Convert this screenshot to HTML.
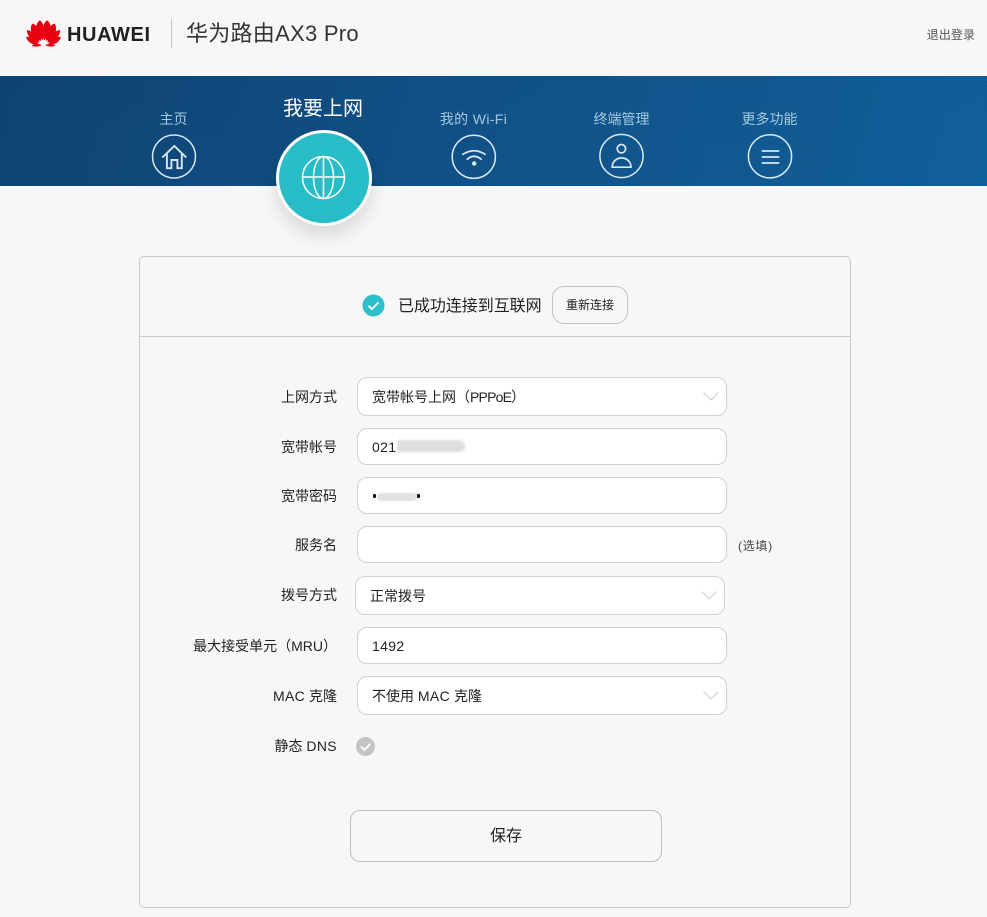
<!DOCTYPE html>
<html lang="zh"><head><meta charset="utf-8"><title>华为路由AX3 Pro</title>
<style>
html,body{margin:0;padding:0}
body{width:987px;height:917px;overflow:hidden;position:relative;background:#f7f7f8;font-family:"Liberation Sans","Noto Sans CJK SC",sans-serif;color:#222}
.a{position:absolute;white-space:nowrap}
.band{left:0;top:76px;width:987px;height:110px;background:linear-gradient(100deg,#0f4373 0%,#115086 45%,#115f9a 100%)}
.dots{left:0;top:76px;width:987px;height:70px;background-image:radial-gradient(rgba(0,0,0,.07) .7px,transparent .9px);background-size:4px 4px;-webkit-mask-image:linear-gradient(#000,transparent);mask-image:linear-gradient(#000,transparent)}
.nav{color:#a5c9e0;font-size:14px;line-height:18px;text-align:center;transform:translateX(-50%)}
.ic{position:absolute}
.card{left:139px;top:256px;width:712px;height:652px;border:1px solid #c9c9c9;border-radius:5px;box-sizing:border-box}
.line{left:140px;top:336px;width:710px;height:1px;background:#c9c9c9}
.f{box-sizing:border-box;background:#fff;border:1px solid #cfcfcf;border-radius:10px;width:370px;font-size:14px;color:#222;padding-left:14px}
.l{font-size:14px;line-height:20px;right:650px;text-align:right;color:#222}
.btn{box-sizing:border-box;border:1px solid #c4c4c4;border-radius:10px;text-align:center;color:#222}
svg.ch{position:absolute;right:7px;top:14px}
.s{letter-spacing:.35px}
</style></head><body>

<svg class="a" style="left:26px;top:20px" width="35" height="27" viewBox="0 0 35 27" fill="#e60012">
<g>
<path d="M17 20.5C12 15 9.5 9.5 10.5 5.5 11 3 12.5 1 14 .4 16.5 2 18 6 17.9 10 17.8 13.5 17.5 17 17 20.5Z"/>
<path d="M15 21C9.5 18 4.8 13.5 4.8 8.5 4.8 6.5 5.5 4.8 6.5 3.5 11.5 5.5 15.8 11.5 15 21Z"/>
<path d="M13.5 22.5C8 22 1.5 18.5 .8 10 6.5 10.8 13 15.5 13.5 22.5Z"/>
<path d="M12.5 24.3C7.5 25.6 2 23 0 17 5.5 16.3 11 19.5 12.5 24.3Z"/>
<path d="M15.8 25C13 26.8 8.5 27.3 5.5 25.5 8.5 23.6 13 23.6 15.8 25Z"/>
</g>
<g transform="matrix(-1 0 0 1 35 0)">
<path d="M17 20.5C12 15 9.5 9.5 10.5 5.5 11 3 12.5 1 14 .4 16.5 2 18 6 17.9 10 17.8 13.5 17.5 17 17 20.5Z"/>
<path d="M15 21C9.5 18 4.8 13.5 4.8 8.5 4.8 6.5 5.5 4.8 6.5 3.5 11.5 5.5 15.8 11.5 15 21Z"/>
<path d="M13.5 22.5C8 22 1.5 18.5 .8 10 6.5 10.8 13 15.5 13.5 22.5Z"/>
<path d="M12.5 24.3C7.5 25.6 2 23 0 17 5.5 16.3 11 19.5 12.5 24.3Z"/>
<path d="M15.8 25C13 26.8 8.5 27.3 5.5 25.5 8.5 23.6 13 23.6 15.8 25Z"/>
</g>
</svg>
<div class="a" style="left:67px;top:23px;font-size:20px;line-height:24px;font-weight:700;color:#231f20;letter-spacing:.6px">HUAWEI</div>
<div class="a" style="left:171px;top:19px;width:1px;height:29px;background:#c8c8c8"></div>
<div class="a" style="left:186px;top:19px;font-size:22px;line-height:30px;color:#333;letter-spacing:.27px">华为路由AX3 Pro</div>
<div class="a" style="right:12px;top:27px;font-size:12px;line-height:16px;color:#555;letter-spacing:.05px">退出登录</div>

<div class="a band"></div>
<div class="a dots"></div>

<div class="a nav" style="left:173.5px;top:110px">主页</div>
<div class="a nav" style="left:473.5px;top:110px;letter-spacing:.35px">我的 Wi-Fi</div>
<div class="a nav" style="left:621.5px;top:110px">终端管理</div>
<div class="a nav" style="left:769.5px;top:110px">更多功能</div>
<div class="a nav" style="left:323px;top:97px;font-size:20px;line-height:24px;color:#fff">我要上网</div>

<svg class="ic" style="left:150px;top:133px" width="48" height="48" viewBox="0 0 48 48" fill="none" stroke="#d5e8f3" stroke-width="1.5">
<circle cx="24" cy="23.5" r="21.5"/>
<path d="M12.3 24.5 24.3 13 36.3 24.5M16.9 21V35.2H21.4V27H27.4V35.2H31.8V21" stroke-width="1.9"/>
</svg>
<svg class="ic" style="left:450px;top:133px" width="48" height="48" viewBox="0 0 48 48" fill="none" stroke="#d5e8f3" stroke-width="1.5">
<circle cx="23.8" cy="23.8" r="21.6"/>
<path d="M12.3 21.7Q24 13.7 35.7 21.7M16.7 26.7Q24 19.9 31.7 26.7" stroke-width="1.7"/>
<circle cx="24.2" cy="30.5" r="2.2" fill="#d5e8f3" stroke="none"/>
</svg>
<svg class="ic" style="left:598px;top:133px" width="48" height="48" viewBox="0 0 48 48" fill="none" stroke="#d5e8f3" stroke-width="1.5">
<circle cx="23.5" cy="23" r="21.6"/>
<circle cx="23.4" cy="15.7" r="4.2" stroke-width="1.7"/>
<path d="M14.2 34.2C14.2 28.5 18.5 25 23.6 25S33 28.5 33 34.2Z" stroke-width="1.7"/>
</svg>
<svg class="ic" style="left:746px;top:133px" width="48" height="48" viewBox="0 0 48 48" fill="none" stroke="#d5e8f3" stroke-width="1.5">
<circle cx="24" cy="23.3" r="21.6"/>
<path d="M15.7 18H33.3M15.7 24H33.3M15.7 30H33.3" stroke-width="1.8"/>
</svg>

<div class="a" style="left:276px;top:130px;width:96px;height:96px;box-sizing:border-box;border-radius:50%;background:#28bdc6;border:3px solid #fff;box-shadow:0 10px 18px rgba(0,0,0,.12)"></div>
<svg class="ic" style="left:300px;top:154px" width="48" height="48" viewBox="0 0 48 48" fill="none" stroke="#fff" stroke-width="1.5">
<circle cx="23.5" cy="23.5" r="21"/>
<ellipse cx="23.5" cy="23.5" rx="10" ry="21"/>
<path d="M23.5 2.5V44.5M2.5 23H44.5"/>
</svg>

<div class="a card"></div>
<div class="a line"></div>

<svg class="ic" style="left:362px;top:294px" width="23" height="23" viewBox="0 0 23 23">
<circle cx="11.5" cy="11.5" r="11" fill="#2cc1ca"/>
<path d="M6.5 11.8 10 15 16.5 8.5" fill="none" stroke="#fff" stroke-width="1.8"/>
</svg>
<div class="a" style="left:398px;top:296px;font-size:16px;line-height:22px;color:#222;letter-spacing:-.05px">已成功连接到互联网</div>
<div class="a btn" style="left:552px;top:286px;width:76px;height:38px;border-radius:12px;font-size:12px;line-height:37px">重新连接</div>

<div class="a l" style="top:387px">上网方式</div>
<div class="a f" style="left:357px;top:377px;height:39px;line-height:38px">宽带帐号上网（<span style="letter-spacing:-.8px">PPPoE</span>）
<svg class="ch" width="16" height="9" viewBox="0 0 16 9" fill="none" stroke="#cdcdcd" stroke-width="1"><path d="M.5 .5 8 8 15.5 .5"/></svg></div>

<div class="a l" style="top:437px">宽带帐号</div>
<div class="a f s" style="left:357px;top:428px;height:37px;line-height:36px">021</div>
<div class="a" style="left:397px;top:440px;width:68px;height:12px;background:#dedede;border-radius:2px 7px 6px 2px;filter:blur(1px)"></div>

<div class="a l" style="top:486px">宽带密码</div>
<div class="a f" style="left:357px;top:477px;height:37px"></div>
<div class="a" style="left:377px;top:493px;width:40px;height:8px;background:#e2e2e2;border-radius:4px;filter:blur(.6px)"></div>
<div class="a" style="left:373px;top:494px;width:2.5px;height:4px;background:#111;border-radius:1px"></div>
<div class="a" style="left:417px;top:494px;width:2.5px;height:4px;background:#111;border-radius:1px"></div>

<div class="a l" style="top:535px">服务名</div>
<div class="a f" style="left:357px;top:526px;height:37px"></div>
<div class="a" style="left:738px;top:538px;font-size:12px;line-height:16px;color:#444;letter-spacing:.7px">(选填)</div>

<div class="a l" style="top:585px">拨号方式</div>
<div class="a f" style="left:355px;top:576px;height:39px;line-height:38px">正常拨号
<svg class="ch" width="16" height="9" viewBox="0 0 16 9" fill="none" stroke="#cdcdcd" stroke-width="1"><path d="M.5 .5 8 8 15.5 .5"/></svg></div>

<div class="a l" style="top:636px">最大接受单元（MRU）</div>
<div class="a f s" style="left:357px;top:627px;height:37px;line-height:36px">1492</div>

<div class="a l" style="top:686px"><span class="s">MAC</span> 克隆</div>
<div class="a f" style="left:357px;top:676px;height:39px;line-height:38px">不使用 <span class="s">MAC</span> 克隆
<svg class="ch" width="16" height="9" viewBox="0 0 16 9" fill="none" stroke="#cdcdcd" stroke-width="1"><path d="M.5 .5 8 8 15.5 .5"/></svg></div>

<div class="a l" style="top:736px">静态 <span class="s">DNS</span></div>
<svg class="ic" style="left:355px;top:736px" width="21" height="21" viewBox="0 0 21 21">
<circle cx="10.5" cy="10.5" r="9.5" fill="#c4c4c4"/>
<path d="M6 10.5 9.5 14 15.5 7.5" fill="none" stroke="#fff" stroke-width="1.8"/>
</svg>

<div class="a btn" style="left:350px;top:810px;width:312px;height:52px;font-size:16px;line-height:51px;border-color:#bdbdbd">保存</div>
</body></html>
